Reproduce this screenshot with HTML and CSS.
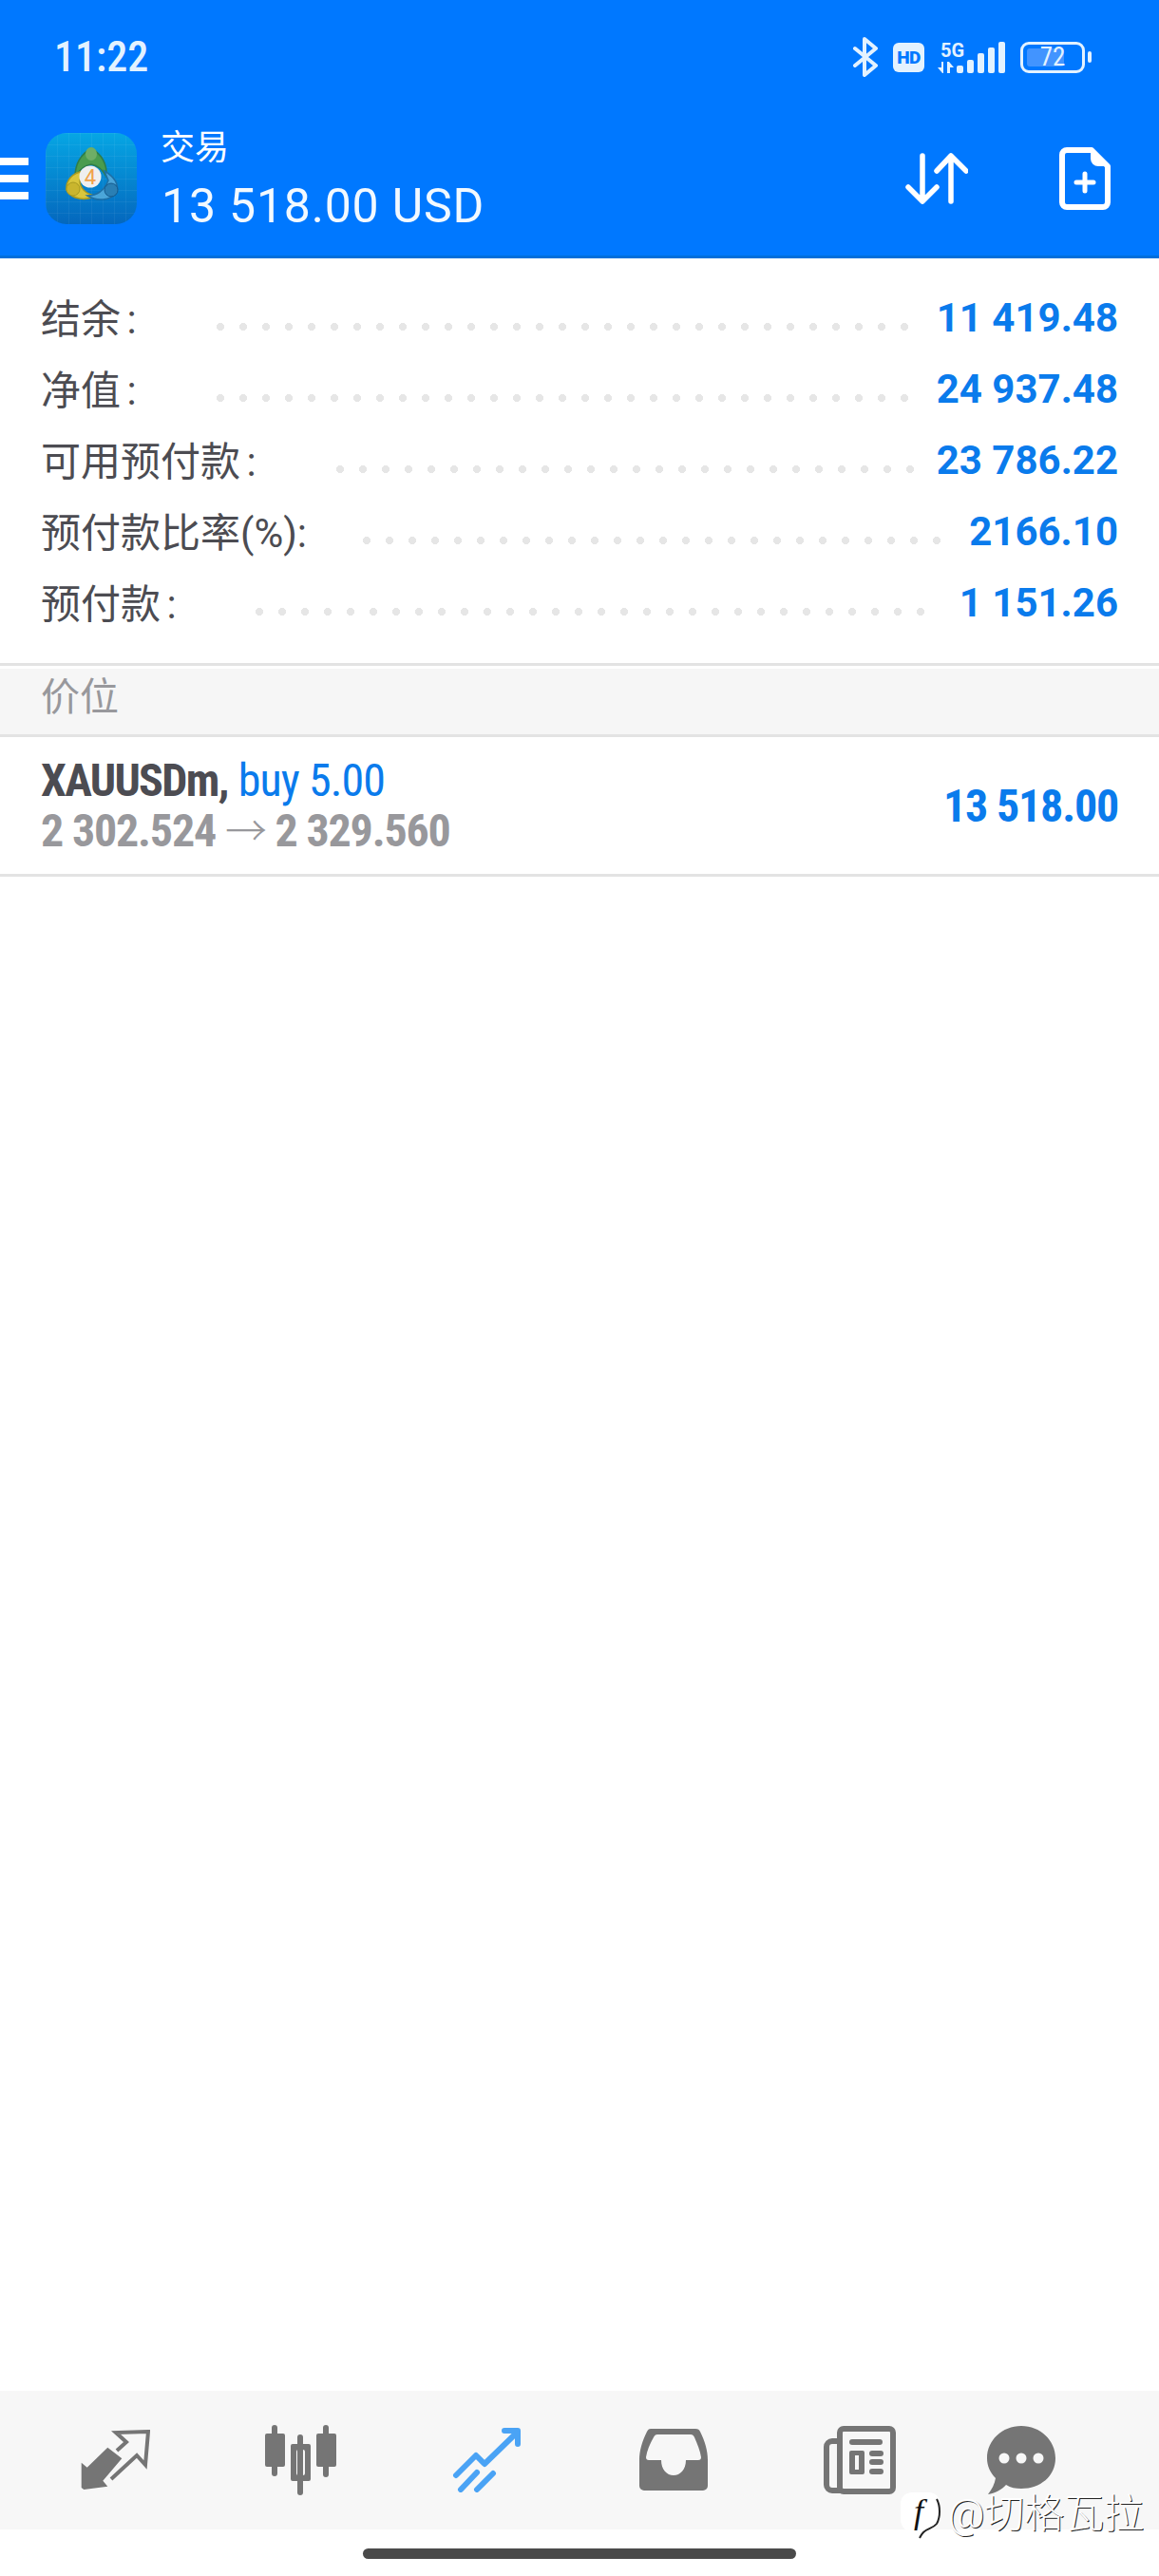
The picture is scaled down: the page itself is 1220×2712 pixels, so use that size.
FILE: index.html
```html
<!DOCTYPE html>
<html lang="zh-CN">
<head>
    <meta charset="UTF-8">
    <meta name="viewport" content="width=device-width, initial-scale=1.0">
    <title>交易</title>
    <link rel="stylesheet" href="styles.css">
</head>
<body>
    <header class="header">
        <div class="status-bar">
            <span class="clock">11:22</span>
            <div class="status-icons">
                <svg class="icon-bt" width="26" height="42" viewBox="0 0 26 42" fill="none" stroke="#e3f2ff" stroke-width="4" stroke-linejoin="round" stroke-linecap="round">
                    <path d="M2 12L24 30L12 40V2L24 12L2 30"/>
                </svg>
                <span class="hd">HD</span>
                <div class="net">
                    <span class="net-label">5G</span>
                    <svg class="net-arrows" width="17" height="12" viewBox="0 0 17 12" fill="#e3f2ff">
                        <path d="M4 0h2v12H5L0 6h4zM10 0h2l5 6h-4v6h-3z"/>
                    </svg>
                </div>
                <svg class="signal" width="51" height="33" viewBox="0 0 51 33" fill="#e3f2ff">
                    <rect x="0" y="25" width="7" height="8" rx="2"/>
                    <rect x="11" y="19" width="7" height="14" rx="2"/>
                    <rect x="22" y="12" width="7" height="21" rx="2"/>
                    <rect x="33" y="6" width="7" height="27" rx="2"/>
                    <rect x="44" y="0" width="7" height="33" rx="2"/>
                </svg>
                <div class="battery">
                    <div class="battery-body">
                        <div class="battery-fill"></div>
                        <span class="battery-text">72</span>
                    </div>
                    <div class="battery-nub"></div>
                </div>
            </div>
        </div>
        <div class="toolbar">
            <div class="menu-btn"><i></i><i></i><i></i></div>
            <svg class="app-logo" width="96" height="96" viewBox="0 0 96 96">
                <defs>
                    <linearGradient id="logoBg" x1="0" y1="0" x2="0" y2="1">
                        <stop offset="0" stop-color="#06a6e4"/>
                        <stop offset="1" stop-color="#0467bd"/>
                    </linearGradient>
                    <pattern id="logoGrid" width="12" height="12" patternUnits="userSpaceOnUse">
                        <path d="M12 0H0V12" fill="none" stroke="#ffffff" stroke-opacity="0.1" stroke-width="1"/>
                    </pattern>
                </defs>
                <rect width="96" height="96" rx="22" fill="url(#logoBg)"/>
                <rect width="96" height="96" rx="22" fill="url(#logoGrid)"/>
                <path d="M48 16C38 22 31 32 31 46C36 38 42 34 48 33C54 34 60 38 64 46C65 32 58 22 48 16Z" fill="#4a9c4e" stroke="#2f7d4a" stroke-width="1.5"/>
                <ellipse cx="48" cy="22" rx="6" ry="7" fill="#6fae66"/>
                <path d="M40 40C28 42 21 50 22 60C28 70 42 72 52 66C42 64 36 58 36 50Z" fill="#d9c63c" stroke="#a89a20" stroke-width="1.5"/>
                <circle cx="29" cy="59" r="7" fill="#c9b52e" stroke="#a89a20"/>
                <path d="M62 40C72 46 77 54 75 62C68 72 54 72 44 66C54 66 62 60 66 50Z" fill="#4ba6d9" stroke="#1d6fa6" stroke-width="1.5"/>
                <circle cx="69" cy="60" r="7" fill="#2a7fb4" stroke="#14598c"/>
                <circle cx="47" cy="46" r="11.5" fill="#efefef"/>
                <text class="logo-digit" x="47" y="54" text-anchor="middle">4</text>
            </svg>
            <div class="account">
                <span class="account-title">交易</span>
                <span class="account-value">13 518.00 USD</span>
            </div>
            <div class="toolbar-actions">
                <svg class="sort-icon" width="66" height="54" viewBox="0 0 66 54" fill="none" stroke="#fff" stroke-width="5.5" stroke-linecap="round" stroke-linejoin="round">
                    <path d="M18 3V51M3 36L18 51L33 36"/>
                    <path d="M48 51V3M33 19L48 3L64 19"/>
                </svg>
                <svg class="file-icon" width="54" height="66" viewBox="0 0 54 66" fill="none">
                    <path d="M8 3H34L51 20V58A5 5 0 0 1 46 63H8A5 5 0 0 1 3 58V8A5 5 0 0 1 8 3Z" stroke="#fff" stroke-width="6" stroke-linejoin="round"/>
                    <path d="M33 3V12A8 8 0 0 0 41 20H51L33 3Z" fill="#fff"/>
                    <path d="M27 28V46M18 37H36" stroke="#fff" stroke-width="5" stroke-linecap="round"/>
                </svg>
            </div>
        </div>
    </header>

    <section class="summary">
        <div class="summary-row">
            <span class="summary-label">结余 :</span>
            <span class="leader leader-short"></span>
            <span class="summary-value">11 419.48</span>
        </div>
        <div class="summary-row">
            <span class="summary-label">净值 :</span>
            <span class="leader leader-short"></span>
            <span class="summary-value">24 937.48</span>
        </div>
        <div class="summary-row">
            <span class="summary-label">可用预付款 :</span>
            <span class="leader leader-free"></span>
            <span class="summary-value">23 786.22</span>
        </div>
        <div class="summary-row">
            <span class="summary-label">预付款比率(%):</span>
            <span class="leader leader-ratio"></span>
            <span class="summary-value">2166.10</span>
        </div>
        <div class="summary-row">
            <span class="summary-label">预付款 :</span>
            <span class="leader leader-margin"></span>
            <span class="summary-value">1 151.26</span>
        </div>
    </section>

    <div class="section-title">价位</div>

    <div class="position">
        <div class="position-info">
            <div class="position-name"><b>XAUUSDm,</b> <span class="position-side">buy 5.00</span></div>
            <div class="position-price">2 302.524 <span class="arrow">→</span> 2 329.560</div>
        </div>
        <div class="position-profit">13 518.00</div>
    </div>

    <main class="empty"></main>

    <nav class="tabbar">
        <div class="tab">
            <svg width="74" height="64" viewBox="0 0 74 64" fill="#757575">
                <path d="M1.7 34.7L7.7 39.7L29.3 18.7L44.3 30.3L24.3 53.7L29.3 59.7L4.3 63L1.7 61Z"/>
                <path d="M39 22L49 13L38 3L72 2L69 37L60 27L33 52" fill="none" stroke="#757575" stroke-width="4"/>
            </svg>
        </div>
        <div class="tab">
            <svg width="76" height="74" viewBox="0 0 76 74" fill="#757575">
                <rect x="7" y="0" width="6" height="54" rx="3"/>
                <rect x="0" y="9" width="21" height="35" rx="2"/>
                <rect x="34" y="10" width="6" height="64" rx="3"/>
                <path fill-rule="evenodd" d="M29 20H46A2 2 0 0 1 48 22V57A2 2 0 0 1 46 59H29A2 2 0 0 1 27 57V22A2 2 0 0 1 29 20ZM35 26A2 2 0 0 0 33 28V51A2 2 0 0 0 35 53H40A2 2 0 0 0 42 51V28A2 2 0 0 0 40 26Z"/>
                <rect x="61" y="0" width="6" height="55" rx="3"/>
                <rect x="54" y="9" width="21" height="35" rx="2"/>
            </svg>
        </div>
        <div class="tab">
            <svg width="74" height="68" viewBox="0 0 74 68" fill="none" stroke="#4aa3f5" stroke-width="6" stroke-linecap="round" stroke-linejoin="round">
                <path d="M4 50L25 29L34 38L67 6"/>
                <path d="M55 3H69V17"/>
                <path d="M9 65L26 47"/>
                <path d="M26 65L43 48"/>
            </svg>
        </div>
        <div class="tab">
            <svg width="72" height="66" viewBox="0 0 72 66" fill="#757575">
                <path fill-rule="evenodd" d="M12 0H59C62 0 63 1 64 3C69 13 72 23 72 33V60A5 5 0 0 1 67 65H5A5 5 0 0 1 0 60V33C0 23 3 13 8 3C9 1 10 0 12 0ZM19 6C17 6 16 7 15 9C11 16 8 23 7 30C7 32 8 33 10 33H23C23 43 29 49 36 49C43 49 49 43 49 33H62C64 33 65 32 65 30C64 23 61 16 58 9C57 7 56 6 54 6Z"/>
            </svg>
        </div>
        <div class="tab">
            <svg width="76" height="72" viewBox="0 0 76 72" fill="none">
                <path d="M14 16H9A6 6 0 0 0 3 22V62A6 6 0 0 0 9 68H20" stroke="#757575" stroke-width="6"/>
                <rect x="17" y="3" width="56" height="66" rx="4" stroke="#757575" stroke-width="6"/>
                <rect x="27" y="14" width="35" height="6" rx="3" fill="#757575"/>
                <path fill-rule="evenodd" clip-rule="evenodd" d="M29 26H41A2 2 0 0 1 43 28V49A2 2 0 0 1 41 51H29A2 2 0 0 1 27 49V28A2 2 0 0 1 29 26ZM33 31V46H37V31Z" fill="#757575"/>
                <rect x="48" y="26" width="15" height="6" rx="3" fill="#757575"/>
                <rect x="48" y="35" width="15" height="6" rx="3" fill="#757575"/>
                <rect x="48" y="45" width="15" height="6" rx="3" fill="#757575"/>
            </svg>
        </div>
        <div class="tab">
            <svg width="72" height="72" viewBox="0 0 72 72">
                <path d="M36 0C56 0 72 15 72 34C72 53 56 66 36 66C30 66 25 65 20 62C16 67 8 71 1 72C5 67 8 61 9 55C3 49 0 42 0 34C0 15 16 0 36 0Z" fill="#757575"/>
                <circle cx="18" cy="34" r="5.5" fill="#f7f7f7"/>
                <circle cx="36" cy="34" r="5.5" fill="#f7f7f7"/>
                <circle cx="54" cy="34" r="5.5" fill="#f7f7f7"/>
            </svg>
        </div>
    </nav>

    <div class="home-area"><div class="home-bar"></div></div>

    <div class="watermark">
        <div class="watermark-logo">
            <svg class="watermark-bubble" width="44" height="50" viewBox="0 0 44 50">
                <path d="M12 0H30C37 0 42 5 42 14V26C42 36 34 39 27 41C24 43 22 46 20 48C20 45 20 43 20 41H12C5 41 0 36 0 28V12C0 5 5 0 12 0Z" fill="#fff"/>
                <path d="M38 7C42 14 42 26 38 33C34 38 28 38 24 42C22 44 21 46 20 48" fill="none" stroke="#222" stroke-width="2"/>
            </svg>
            <span class="watermark-f">f</span>
        </div>
        <span class="watermark-text">@切格瓦拉</span>
    </div>
</body>
</html>
```

FILE: styles.css
```css
* {
    box-sizing: border-box;
}
body {
    margin: 0;
    width: 1220px;
    height: 2712px;
    display: flex;
    flex-direction: column;
    position: relative;
    overflow: hidden;
    background: #fff;
    font-family: Roboto, "Noto Sans CJK SC", sans-serif;
    color: #4c4c52;
}
.header {
    background: #0078ff;
    border-bottom: 3px solid #006fdb;
    height: 272px;
    color: #fff;
}
.status-bar {
    height: 120px;
    display: flex;
    justify-content: space-between;
    align-items: center;
    padding: 0 71px 0 57px;
}
.clock {
    font-size: 44px;
    font-weight: 500;
    font-stretch: 75%;
    color: #e3f2ff;
}
.status-icons {
    display: flex;
    align-items: center;
}
.hd {
    width: 33px;
    height: 31px;
    margin-left: 16px;
    background: #e3f2ff;
    border-radius: 6px;
    color: #0078ff;
    font-size: 19px;
    font-weight: 900;
    letter-spacing: -0.5px;
    line-height: 31px;
    text-align: center;
}
.net {
    display: flex;
    flex-direction: column;
    align-items: flex-start;
    width: 31px;
    margin-left: 14px;
}
.net-label {
    margin-left: 3px;
    font-size: 20px;
    font-weight: 700;
    line-height: 18px;
    color: #e3f2ff;
}
.net-arrows {
    margin-top: 3px;
}
.signal {
    margin-left: -11px;
}
.battery {
    display: flex;
    align-items: center;
    margin-left: 16px;
}
.battery-body {
    width: 68px;
    height: 33px;
    border: 3px solid #e3f2ff;
    border-radius: 9px;
    padding: 4px;
    position: relative;
}
.battery-fill {
    width: 72%;
    height: 100%;
    background: #4294ff;
    border-radius: 3px;
}
.battery-text {
    position: absolute;
    top: 0;
    left: 0;
    right: 0;
    text-align: center;
    font-size: 27px;
    font-stretch: 75%;
    line-height: 27px;
    color: #e3f2ff;
}
.battery-nub {
    width: 4px;
    height: 12px;
    margin-left: 3px;
    background: #e3f2ff;
    border-radius: 2px;
}
.toolbar {
    height: 136px;
    display: flex;
    align-items: center;
}
.menu-btn {
    width: 30px;
    margin-right: 18px;
}
.menu-btn i {
    display: block;
    height: 8px;
    margin: 10px 0;
    background: #fff;
}
.app-logo {
    flex: none;
}
.account {
    display: flex;
    flex-direction: column;
    margin-left: 26px;
    margin-top: 4px;
}
.account-title {
    font-size: 36px;
    line-height: 46px;
    margin-left: -1px;
}
.account-value {
    margin-top: 7px;
    font-size: 50px;
    letter-spacing: 0.8px;
    line-height: 62px;
    color: #f2f9ff;
}
.toolbar-actions {
    margin-left: auto;
    padding-right: 51px;
    display: flex;
    align-items: center;
    gap: 96px;
}
.summary {
    padding: 25px 43px 26px;
}
.summary-row {
    height: 75px;
    display: flex;
    align-items: center;
}
.summary-label {
    margin-top: -5px;
    font-size: 42px;
    word-spacing: -4px;
    white-space: nowrap;
}
.leader {
    flex: none;
    height: 8px;
    margin-top: 18px;
    background-image: radial-gradient(circle at center, #e6e6e6 3.8px, transparent 4.3px);
    background-size: 24px 8px;
    background-repeat: repeat-x;
}
.leader-short {
    width: 744px;
    margin-left: 76px;
}
.leader-free {
    width: 624px;
    margin-left: 76px;
}
.leader-ratio {
    width: 624px;
    margin-left: 51px;
}
.leader-margin {
    width: 720px;
    margin-left: 75px;
}
.summary-value {
    margin-left: auto;
    font-size: 42px;
    font-weight: 700;
    color: #0a7bec;
    white-space: nowrap;
}
.section-title {
    height: 78px;
    border-top: 3px solid #e3e3e3;
    border-bottom: 3px solid #e3e3e3;
    background: linear-gradient(#fff 3px, #f6f6f6 3px);
    padding-left: 43px;
    font-size: 41px;
    line-height: 66px;
    color: #98989c;
}
.position {
    height: 147px;
    border-bottom: 3px solid #e3e3e3;
    display: flex;
    justify-content: space-between;
    align-items: center;
    padding: 0 43px;
}
.position-name,
.position-price {
    font-size: 48px;
    line-height: 51px;
    font-stretch: 75%;
    white-space: nowrap;
}
.position-name b {
    letter-spacing: -1.7px;
}
.position-price {
    font-weight: 700;
    letter-spacing: -1.2px;
    color: #98989c;
}
.position-side {
    letter-spacing: -0.9px;
    color: #0a7bec;
}
.arrow {
    font-family: "Noto Sans CJK SC", sans-serif;
    font-weight: 300;
    font-size: 44px;
}
.position-profit {
    font-size: 48px;
    font-weight: 700;
    font-stretch: 75%;
    letter-spacing: -1.2px;
    color: #0a7bec;
}
.empty {
    flex: 1;
}
.tabbar {
    height: 146px;
    background: #f7f7f7;
    padding-left: 23px;
    display: grid;
    grid-template-columns: repeat(5, 196px) 144px;
    align-items: center;
    justify-items: center;
}
.tab {
    display: flex;
}
.home-area {
    height: 49px;
    padding-top: 20px;
}
.home-bar {
    width: 456px;
    height: 11px;
    margin: 0 auto;
    background: #4a4a4a;
    border-radius: 6px;
}
.watermark {
    position: absolute;
    left: 948px;
    top: 2612px;
    display: flex;
    align-items: flex-start;
    gap: 6px;
}
.watermark-logo {
    width: 44px;
    height: 50px;
    margin-top: 12px;
    display: grid;
    justify-items: center;
}
.watermark-bubble,
.watermark-f {
    grid-area: 1 / 1;
}
.watermark-f {
    font-family: "Liberation Serif", serif;
    font-style: italic;
    font-size: 36px;
    line-height: 40px;
    padding-right: 6px;
    color: #111;
}
.watermark-text {
    font-size: 42px;
    font-weight: 300;
    color: #fff;
    text-shadow: 1px 1px 0 #222;
    white-space: nowrap;
}
.logo-digit {
    font-size: 22px;
    font-weight: 400;
    fill: #f0a24a;
}
```
